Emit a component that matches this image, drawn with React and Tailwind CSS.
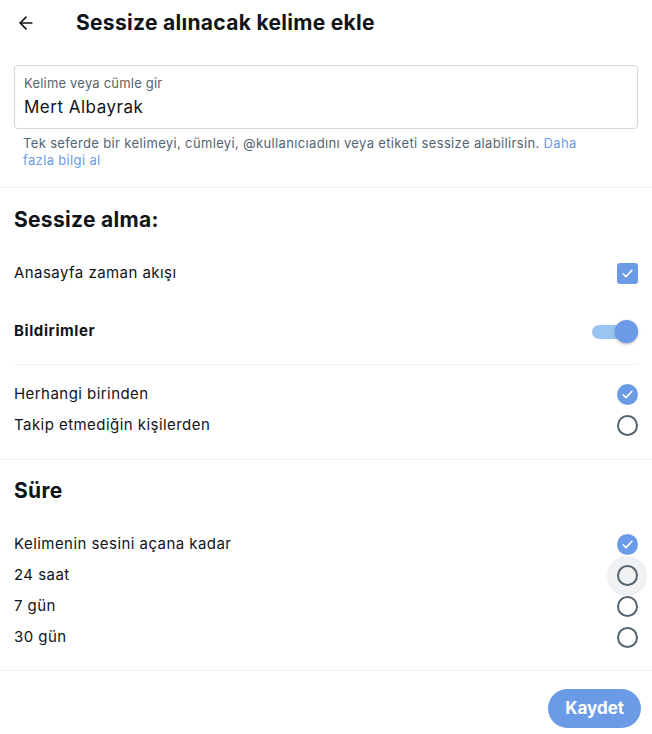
import { ArrowLeft } from 'lucide-react'

const font = { fontFamily: 'Inter, "Noto Sans", sans-serif' }

function Check({ className = 'w-[15px] h-[15px]' }) {
  return (
    <svg viewBox="0 0 24 24" className={className} fill="none" stroke="white" strokeWidth="2.4" strokeLinecap="round" strokeLinejoin="round">
      <path d="M5 12.5l4.5 4.5L19 7" />
    </svg>
  )
}

function Radio({ checked, hover }) {
  return (
    <div className={`w-10 h-10 -mr-[9px] rounded-full flex items-center justify-center ${hover ? 'bg-[#eff1f3]' : ''}`}>
      {checked ? (
        <div className="w-[21px] h-[21px] rounded-full bg-[#6b9be6] flex items-center justify-center">
          <Check />
        </div>
      ) : (
        <div className="w-[21px] h-[21px] rounded-full border-2 border-[#536471]" />
      )}
    </div>
  )
}

function Row({ label, children, bold }) {
  return (
    <div className="flex items-center justify-between px-[14px] h-[31px]">
      <span className={`text-[15px] text-[#0f1419] ${bold ? 'font-bold tracking-[0.6px]' : 'tracking-[0.45px]'}`}>{label}</span>
      {children}
    </div>
  )
}

export default function App() {
  return (
    <div className="w-[652px] h-[734px] bg-white flex flex-col" style={font}>
      <div className="h-[45px] flex items-center px-[16px]">
        <ArrowLeft className="w-5 h-5 text-[#0f1419]" strokeWidth={2} />
        <h1 className="ml-[40px] text-[21px] font-bold text-[#0f1419] tracking-[0.3px]">Sessize alınacak kelime ekle</h1>
      </div>

      <div className="px-[14px] pt-[20px]">
        <div className="border border-[#cfd9de] rounded-[4px] h-[64px] px-[9px] pt-[9px]">
          <div className="text-[13px] text-[#536471] leading-[16px] tracking-[0.2px]">Kelime veya cümle gir</div>
          <div className="text-[17px] text-[#0f1419] leading-[24px] mt-[4px] tracking-[0.5px]">Mert Albayrak</div>
        </div>
        <p className="pl-[9px] pr-[45px] pt-[6px] text-[13px] leading-[17px] text-[#536471] tracking-[0.35px]">
          Tek seferde bir kelimeyi, cümleyi, @kullanıcıadını veya etiketi sessize alabilirsin.{' '}
          <span className="text-[#6b9be6]">Daha</span>{' '}
          <span className="text-[#6b9be6]">fazla bilgi al</span>
        </p>
      </div>

      <div className="mt-[18px] border-t border-[#eff3f4]" />

      <h2 className="px-[14px] mt-[18px] text-[21px] font-bold text-[#0f1419] leading-[28px] tracking-[0.3px]">Sessize alma:</h2>

      <div className="mt-[24px]">
        <Row label="Anasayfa zaman akışı">
          <div className="w-[21px] h-[21px] rounded-[3px] bg-[#6b9be6] flex items-center justify-center">
            <Check />
          </div>
        </Row>
      </div>
      <div className="mt-[27px]">
        <Row label="Bildirimler" bold>
          <div className="relative w-[46px] h-[24px] flex items-center">
            <div className="absolute left-0 right-[6px] h-[14px] rounded-full bg-[#9bc4f2]" />
            <div className="absolute right-0 w-[23px] h-[23px] rounded-full bg-[#6b9be6] shadow-[0_1px_3px_rgba(0,0,0,0.3)]" />
          </div>
        </Row>
      </div>

      <div className="mx-[14px] mt-[17px] border-t border-[#eff3f4]" />

      <div className="mt-[14px]">
        <Row label="Herhangi birinden"><Radio checked /></Row>
        <Row label="Takip etmediğin kişilerden"><Radio /></Row>
      </div>

      <div className="mt-[18px] border-t border-[#eff3f4]" />

      <h2 className="px-[14px] mt-[17px] text-[21px] font-bold text-[#0f1419] leading-[28px] tracking-[0.3px]">Süre</h2>

      <div className="mt-[24px]">
        <Row label="Kelimenin sesini açana kadar"><Radio checked /></Row>
        <Row label="24 saat"><Radio hover /></Row>
        <Row label="7 gün"><Radio /></Row>
        <Row label="30 gün"><Radio /></Row>
      </div>

      <div className="mt-[17px] border-t border-[#eff3f4]" />

      <div className="flex justify-end px-[11px] mt-[18px]">
        <button className="h-[39px] px-[17px] rounded-full bg-[#6b9be6] text-white font-bold text-[17px]">Kaydet</button>
      </div>
    </div>
  )
}
